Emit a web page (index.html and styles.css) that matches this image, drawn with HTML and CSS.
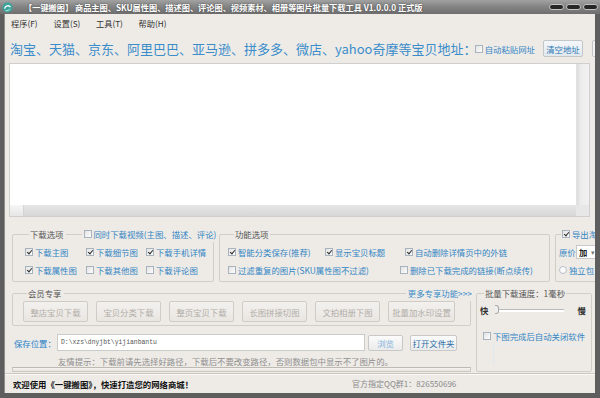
FILE: index.html
```html
<!DOCTYPE html>
<html lang="zh-CN">
<head>
  <meta charset="UTF-8" />
  <title>一键搬图</title>
  <link rel="stylesheet" href="styles.css">
</head>
<body>
<div class="window">

  <div class="titlebar">
    <svg class="app-icon" viewBox="0 0 12 12">
      <circle cx="6" cy="6" r="5.5" fill="#3aa39c"/>
      <path d="M2.8 7.2C3.6 4 7.6 3 9.2 5.6" stroke="#fff" stroke-width="1.4" fill="none"/>
      <path d="M3.8 9.4C5.8 10 8 9 9 7.4" stroke="#cdeee9" stroke-width="1" fill="none"/>
    </svg>
    <span class="title">【一键搬图】 商品主图、SKU属性图、描述图、评论图、视频素材、相册等图片批量下载工具 V1.0.0.0 正式版</span>
    <div class="win-btns"><span></span><span></span><span></span></div>
  </div>

  <div class="client">
    <ul class="menubar">
      <li>程序(<u>F</u>)</li>
      <li>设置(<u>S</u>)</li>
      <li>工具(<u>T</u>)</li>
      <li>帮助(<u>H</u>)</li>
    </ul>

    <div class="url-row">
      <h1 class="headline">淘宝、天猫、京东、阿里巴巴、亚马逊、拼多多、微店、yahoo奇摩等宝贝地址：</h1>
      <label class="chk"><i class="box"></i>自动粘贴网址</label>
      <button class="btn btn-clear">清空地址</button>
      <button class="btn btn-cut"></button>
    </div>

    <div class="url-box">
      <div class="url-text"></div>
      <div class="vscroll"></div>
      <div class="hscroll"><span class="thumb"></span></div>
      <div class="corner"></div>
    </div>

    <div class="options">
      <fieldset class="group g-download">
        <legend>
          <span class="legend-text">下载选项</span>
          <i class="rule short"></i>
          <label class="chk"><i class="box"></i>同时下载视频(主图、描述、评论)</label>
        </legend>
        <div class="chk-grid">
          <label class="chk"><i class="box on"></i>下载主图</label>
          <label class="chk"><i class="box on"></i>下载细节图</label>
          <label class="chk"><i class="box on"></i>下载手机详情</label>
          <label class="chk"><i class="box on"></i>下载属性图</label>
          <label class="chk"><i class="box"></i>下载其他图</label>
          <label class="chk"><i class="box"></i>下载评论图</label>
        </div>
      </fieldset>

      <fieldset class="group g-func">
        <legend><span class="legend-text">功能选项</span></legend>
        <div class="chk-row">
          <label class="chk w97"><i class="box on"></i>智能分类保存(推荐)</label>
          <label class="chk w80"><i class="box on"></i>显示宝贝标题</label>
          <label class="chk"><i class="box on"></i>自动删除详情页中的外链</label>
        </div>
        <div class="chk-row">
          <label class="chk w172"><i class="box"></i>过滤重复的图片(SKU属性图不过滤)</label>
          <label class="chk"><i class="box"></i>删除已下载完成的链接(断点续传)</label>
        </div>
      </fieldset>

      <fieldset class="group g-export">
        <legend><label class="chk"><i class="box on"></i>导出淘宝</label></legend>
        <div class="price-row">
          <span class="muted-blue">原价</span>
          <span class="select"><b>加</b><i class="caret">▾</i></span>
        </div>
        <label class="chk radio-row"><i class="radio"></i>独立包</label>
      </fieldset>
    </div>

    <div class="lower">
      <div class="lower-left">
        <fieldset class="group g-member">
          <legend>
            <span class="legend-text">会员专享</span>
            <i class="rule"></i>
            <a class="more">更多专享功能&gt;&gt;&gt;</a>
          </legend>
          <div class="member-btns">
            <button class="btn btn-off">整店宝贝下载</button>
            <button class="btn btn-off">宝贝分类下载</button>
            <button class="btn btn-off">整页宝贝下载</button>
            <button class="btn btn-off">长图拼接切图</button>
            <button class="btn btn-off">文拍相册下图</button>
            <button class="btn btn-off wide">批量加水印设置</button>
          </div>
        </fieldset>

        <div class="save-row">
          <span class="save-label">保存位置：</span>
          <span class="path-input">D:\xzs\dnyjbt\yijianbantu</span>
          <button class="btn btn-light browse">浏览</button>
          <button class="btn btn-light open">打开文件夹</button>
        </div>
        <p class="tip">友情提示：下载前请先选择好路径，下载后不要改变路径，否则数据包中显示不了图片的。</p>
        <div class="progress"></div>
      </div>

      <fieldset class="group g-speed">
        <legend><span class="legend-text">批量下载速度：1毫秒</span></legend>
        <div class="speed-row">
          <b>快</b>
          <span class="track"><i class="knob"></i></span>
          <b>慢</b>
        </div>
        <label class="chk auto-close"><i class="box"></i>下图完成后自动关闭软件</label>
        <div class="faded-box"></div>
      </fieldset>
    </div>

    <div class="statusbar">
      <span class="welcome">欢迎使用《一键搬图》，快速打造您的网络商城！</span>
      <span class="qq">官方指定QQ群1：826550696</span>
    </div>
  </div>

</div>
</body>
</html>
```

FILE: styles.css
```css
* {
  box-sizing: border-box;
}
body {
  margin: 0;
  width: 600px;
  height: 398px;
  overflow: hidden;
  font-family: "Noto Sans CJK SC", "Noto Sans", sans-serif;
  font-size: 8.4px;
  color: #333;
  background: #5e5e5e;
}

.window {
  display: flex;
  flex-direction: column;
  height: 398px;
}

/* Title bar */
.titlebar {
  height: 14px;
  flex: none;
  display: flex;
  align-items: center;
  padding: 0 2px 0 2px;
  background: linear-gradient(#a2a2a2, #858585 45%, #6e6e6e);
  color: #fff;
}
.app-icon {
  width: 11px;
  height: 11px;
  flex: none;
}
.title {
  margin-left: 11px;
  font-weight: bold;
  font-size: 8.2px;
  line-height: 14px;
  white-space: nowrap;
  text-shadow: 0 0 2px #3c3c3c;
}
.win-btns {
  margin-left: auto;
  display: flex;
  gap: 2px;
}
.win-btns span {
  width: 15px;
  height: 6px;
  border-radius: 3px;
  background: #262626;
  border: 1px solid #c4c4c4;
}

/* Client area */
.client {
  flex: 1;
  display: flex;
  flex-direction: column;
  margin: 0 5px 5px 4px;
  background: #eeebe7;
  border-left: 1px solid #8d8d8d;
  overflow: hidden;
}

.menubar {
  list-style: none;
  margin: 0;
  padding: 0 0 0 6px;
  height: 18px;
  display: flex;
  flex: none;
}
.menubar li {
  width: 42.5px;
  line-height: 19px;
  font-size: 8.2px;
  color: #333;
}
.menubar u {
  text-decoration: none;
}

/* URL row */
.url-row {
  margin-top: 7px;
  height: 19px;
  flex: none;
  display: flex;
  align-items: center;
  padding-left: 5px;
}
.headline {
  flex: 1;
  min-width: 0;
  margin: 0;
  font-size: 13px;
  font-weight: normal;
  line-height: 19px;
  white-space: nowrap;
  color: #3b8dca;
}
.url-row .chk {
  margin-right: 8px;
}
.btn {
  font-family: inherit;
  font-size: 8.4px;
  padding: 0;
  border-radius: 2px;
  cursor: default;
}
.btn-clear {
  width: 40px;
  height: 17px;
  border: 1px solid #c3c6c9;
  background: linear-gradient(#f4f7fa, #e1e8ee);
  color: #2c78b4;
}
.btn-cut {
  width: 12px;
  height: 17px;
  margin: 0 -9px 0 9px;
  border: 1px solid #c3c6c9;
  background: #f2f2f2;
}

/* Address text box */
.url-box {
  margin: 5px 5px 0 4px;
  height: 154px;
  flex: none;
  display: grid;
  grid-template-columns: 1fr 13px;
  grid-template-rows: 1fr 11px;
  border: 1px solid #cfcfcf;
  background: #fff;
}
.vscroll {
  background: linear-gradient(90deg, #dcdcdc, #ececec 30%, #f1f1f1);
  border-left: 1px solid #e2e2e2;
}
.hscroll {
  background: linear-gradient(#e6e6e6, #d6d6d6);
  display: flex;
}
.hscroll .thumb {
  width: 14px;
  background: linear-gradient(#f6f6f6, #e6e6e6);
  border-right: 1px solid #d4d4d4;
}
.corner {
  background: #e7e7e7;
}

/* Check boxes */
.chk {
  display: flex;
  align-items: center;
  gap: 2px;
  color: #3385c3;
  white-space: nowrap;
  line-height: 18px;
}
.box {
  position: relative;
  flex: none;
  width: 8px;
  height: 8px;
  border: 1px solid #a9b3bd;
  background: linear-gradient(135deg, #e3e3e3, #fdfdfd);
}
.box.on::after {
  content: "";
  position: absolute;
  left: 2px;
  top: 0;
  width: 2px;
  height: 4px;
  border-right: 1.2px solid #2b2b2b;
  border-bottom: 1.2px solid #2b2b2b;
  transform: rotate(40deg);
}
.radio {
  flex: none;
  width: 8px;
  height: 8px;
  border-radius: 50%;
  border: 1px solid #b8c0c8;
  background: #fafafa;
}

/* Group boxes */
.group {
  margin: 0;
  min-width: 0;
  flex: none;
  border: 1px solid #d1cdc7;
  border-radius: 2px;
}
.group legend {
  display: flex;
  align-items: center;
  margin-left: 4px;
  padding: 0 1px;
  line-height: 16px;
  height: 16px;
}
.legend-text {
  color: #555;
  white-space: nowrap;
}
.rule {
  flex: 1;
  height: 0;
  margin: 0 2px;
  border-top: 1px solid #d1cdc7;
}
.rule.short {
  flex: none;
  width: 16px;
}

.options {
  margin-top: 9px;
  padding-left: 7px;
  display: flex;
  gap: 5px;
  flex: none;
}
.g-download {
  width: 202px;
  padding: 1px 0 2px 12px;
}
.chk-grid {
  display: grid;
  grid-template-columns: 61px 60px auto;
  grid-auto-rows: 18px;
}
.g-func {
  width: 331px;
  padding: 1px 0 2px 8px;
}
.g-func legend {
  margin-left: 6px;
}
.chk-row {
  display: flex;
  height: 18px;
}
.w97 { width: 97px; }
.w80 { width: 80px; }
.w172 { width: 172px; }

.g-export {
  width: 60px;
  padding: 1px 0 2px 3px;
}
.g-export legend {
  margin-left: 2px;
}
.price-row {
  display: flex;
  align-items: center;
  height: 18px;
}
.muted-blue {
  flex: none;
  width: 17px;
  white-space: nowrap;
  color: #3385c3;
}
.select {
  flex: none;
  display: flex;
  align-items: center;
  justify-content: space-between;
  width: 21px;
  height: 14px;
  padding: 0 1px 0 2px;
  background: #fff;
  border: 1px solid #c9c9c9;
  color: #222;
}
.caret {
  font-style: normal;
  color: #777;
  font-size: 7px;
}
.radio-row {
  height: 18px;
}

/* Lower part */
.lower {
  margin-top: 3px;
  padding-left: 7px;
  display: flex;
  gap: 5px;
  flex: none;
}
.lower-left {
  width: 459px;
  display: flex;
  flex-direction: column;
}
.g-member {
  padding: 0 0 3px 10px;
}
.g-member legend {
  width: 446px;
}
.more {
  color: #3a8cc8;
  white-space: nowrap;
}
.member-btns {
  display: flex;
  gap: 8px;
}
.btn-off {
  width: 65px;
  height: 21px;
  border: 1px solid #cfccc7;
  background: linear-gradient(#f3f1ee, #e9e6e2);
  color: #b1ada7;
}
.btn-off.wide {
  width: 67px;
}

.save-row {
  margin-top: 8px;
  height: 17px;
  display: flex;
  align-items: center;
  padding-left: 2px;
}
.save-label {
  width: 43px;
  color: #2f7fc0;
  text-shadow: 0 0 2px #d4e8f7;
}
.path-input {
  width: 308px;
  height: 17px;
  padding-left: 3px;
  border: 1px solid #cbcbcb;
  background: #fff;
  font-family: "Liberation Mono", monospace;
  font-size: 6.4px;
  line-height: 15px;
  color: #555;
}
.btn-light {
  height: 16px;
  border: 1px solid #c8c8c8;
  background: linear-gradient(#fbfbfb, #ebebeb);
}
.browse {
  width: 35px;
  margin-left: 3px;
  color: #7fb3db;
}
.open {
  width: 47px;
  margin-left: 7px;
  color: #2a6ea8;
}

.tip {
  margin: 4px 0 0;
  padding-left: 46px;
  line-height: 12px;
  color: #8e8e8e;
  white-space: nowrap;
}
.progress {
  height: 5px;
  border: 1px solid #cbc7c1;
  border-top-color: #bdb9b3;
  background: linear-gradient(#f6f4f1, #e6e3de);
}

.g-speed {
  width: 116px;
  padding: 1px 0 0 3px;
}
.speed-row {
  display: flex;
  align-items: center;
  height: 16px;
}
.speed-row b {
  font-weight: bold;
  color: #333;
}
.track {
  position: relative;
  width: 68px;
  height: 3px;
  margin: 0 13px 0 8px;
  background: #fff;
  border-top: 1px solid #b9b9b9;
}
.knob {
  position: absolute;
  left: -1px;
  top: -5px;
  width: 4px;
  height: 9px;
  border: 1px solid #a9a9a9;
  border-left: none;
  border-radius: 0 3px 3px 0;
  background: #eeeeee;
}
.auto-close {
  margin-top: 11px;
  padding-left: 3px;
  line-height: 14px;
}
.faded-box {
  margin: 1px 8px 0 13px;
  height: 20px;
  border-left: 1px solid #dfe7ef;
  border-top: 1px solid #e6ecf2;
}

/* Status bar */
.statusbar {
  margin-top: 1px;
  flex: 1;
  display: flex;
  align-items: center;
  padding-left: 8px;
  border-top: 1px solid #c9c5bf;
  box-shadow: inset 0 1px 0 #fbfaf8;
}
.welcome {
  width: 339px;
  font-weight: bold;
  color: #111;
}
.qq {
  color: #8a8a8a;
  font-size: 8px;
}
```
